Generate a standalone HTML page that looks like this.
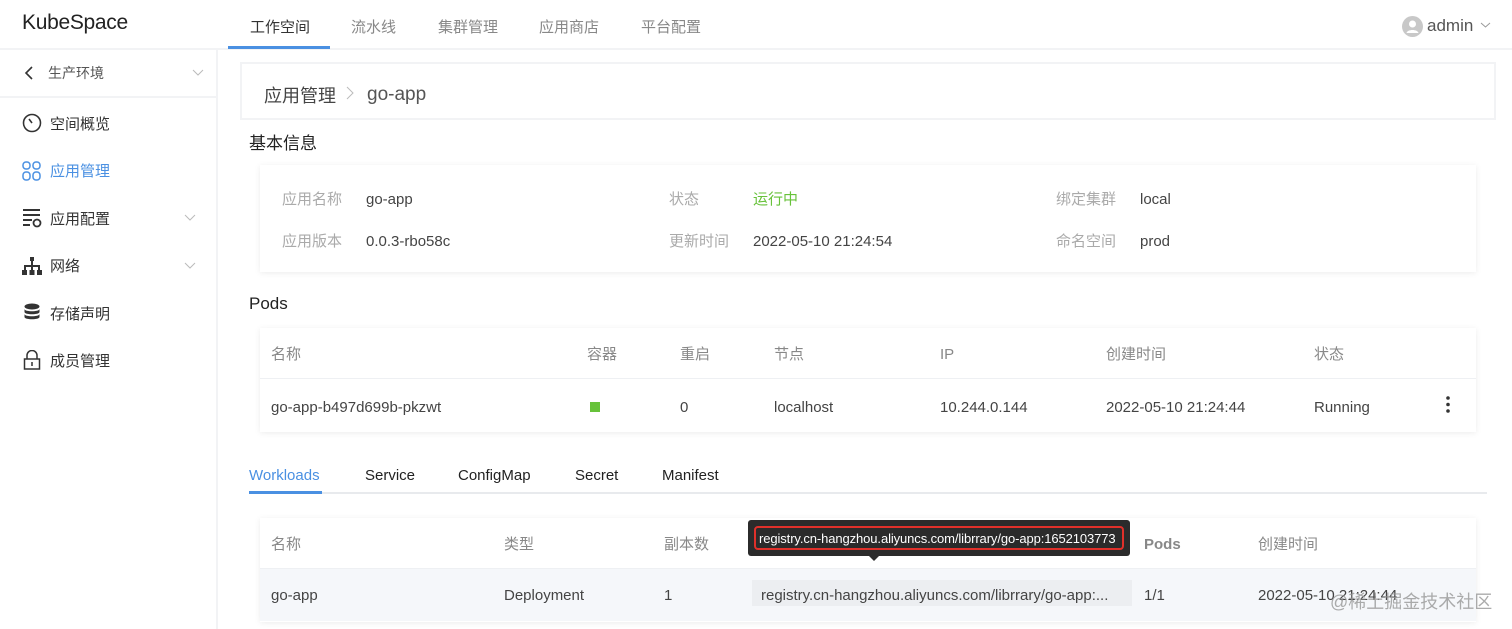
<!DOCTYPE html>
<html><head><meta charset="utf-8"><style>
*{box-sizing:border-box;margin:0;padding:0}
body{width:1512px;height:629px;overflow:hidden;background:#fff;font-family:"Liberation Sans","Noto Sans CJK SC",sans-serif;color:#333;position:relative}
.a{position:absolute;white-space:nowrap}
.card{position:absolute;background:#fff;box-shadow:0 1px 6px rgba(0,0,0,.08)}
.t{font-size:15px}
.l{margin-top:2px}
.c{margin-top:-1px}
</style></head><body>
<!-- header -->
<div class="a" style="left:0;top:0;width:1512px;height:50px;border-bottom:2px solid #f2f3f5"></div>
<div class="a" style="left:22px;top:11px;font-size:21px;color:#222;letter-spacing:-0.3px">KubeSpace</div>
<div class="a t c" style="left:250px;top:17px;color:#333">工作空间</div>
<div class="a" style="left:228px;top:46px;width:102px;height:3px;background:#4a90e2"></div>
<div class="a t c" style="left:351px;top:17px;color:#888">流水线</div>
<div class="a t c" style="left:438px;top:17px;color:#888">集群管理</div>
<div class="a t c" style="left:539px;top:17px;color:#888">应用商店</div>
<div class="a t c" style="left:641px;top:17px;color:#888">平台配置</div>
<div class="a" style="left:1402px;top:16px;width:21px;height:21px;border-radius:50%;background:#c8c8c8"></div>
<svg class="a" style="left:1402px;top:16px" width="21" height="21"><circle cx="10.5" cy="8" r="3.5" fill="#fff"/><path d="M4.5 17c1-4 11-4 12 0z" fill="#fff"/></svg>
<div class="a" style="left:1427px;top:16px;font-size:17px;color:#555">admin</div>
<svg class="a" style="left:1480px;top:21px" width="11" height="8"><path d="M1 2l4.5 4 4.5-4" stroke="#999" fill="none"/></svg>
<!-- sidebar -->
<div class="a" style="left:0;top:50px;width:218px;height:579px;border-right:2px solid #f2f3f5"></div>
<div class="a" style="left:0;top:96px;width:218px;height:2px;background:#f2f3f5"></div>
<svg class="a" style="left:24px;top:65px" width="12" height="16"><path d="M8 2l-6 6 6 6" stroke="#333" stroke-width="1.6" fill="none"/></svg>
<div class="a c" style="left:48px;top:64px;font-size:14px;color:#555">生产环境</div>
<svg class="a" style="left:192px;top:69px" width="12" height="8"><path d="M1 1l5 5 5-5" stroke="#bbb" fill="none"/></svg>
<svg class="a" style="left:22px;top:113px" width="20" height="20"><circle cx="10" cy="10" r="8.5" stroke="#333" stroke-width="1.6" fill="none"/><path d="M10 10l-3-4" stroke="#333" stroke-width="1.6"/></svg>
<div class="a t c" style="left:50px;top:114px">空间概览</div>
<svg class="a" style="left:22px;top:161px" width="20" height="20" fill="none" stroke="#4a90e2" stroke-width="1.5"><rect x="1" y="1" width="7" height="7" rx="3"/><rect x="11" y="1" width="7" height="7" rx="3"/><rect x="1" y="11" width="7" height="8" rx="3"/><rect x="11" y="11" width="7" height="8" rx="3"/></svg>
<div class="a t c" style="left:50px;top:161px;color:#4a90e2">应用管理</div>
<svg class="a" style="left:22px;top:208px" width="20" height="20" fill="#333"><rect x="1" y="1" width="17" height="2"/><rect x="1" y="6" width="17" height="2"/><rect x="1" y="11" width="9" height="2"/><rect x="1" y="16" width="7" height="2"/><circle cx="15" cy="15" r="3.5" stroke="#333" stroke-width="1.8" fill="none"/></svg>
<div class="a t c" style="left:50px;top:209px">应用配置</div>
<svg class="a" style="left:184px;top:214px" width="12" height="8"><path d="M1 1l5 5 5-5" stroke="#bbb" fill="none"/></svg>
<svg class="a" style="left:22px;top:256px" width="20" height="20" fill="#333"><rect x="8" y="1" width="4" height="4"/><rect x="9" y="5" width="2" height="5"/><rect x="2" y="9" width="16" height="2"/><rect x="2" y="9" width="2" height="5"/><rect x="9" y="9" width="2" height="5"/><rect x="16" y="9" width="2" height="5"/><rect x="0" y="14" width="5" height="5"/><rect x="7.5" y="14" width="5" height="5"/><rect x="15" y="14" width="5" height="5"/></svg>
<div class="a t c" style="left:50px;top:256px">网络</div>
<svg class="a" style="left:184px;top:262px" width="12" height="8"><path d="M1 1l5 5 5-5" stroke="#bbb" fill="none"/></svg>
<svg class="a" style="left:24px;top:303px" width="16" height="20" fill="#333"><ellipse cx="8" cy="3.5" rx="7.5" ry="3"/><path d="M.5 6c0 3 15 3 15 0v3c0 3-15 3-15 0zM.5 11c0 3 15 3 15 0v3c0 3-15 3-15 0z"/></svg>
<div class="a t c" style="left:50px;top:304px">存储声明</div>
<svg class="a" style="left:23px;top:350px" width="18" height="20" fill="none" stroke="#333" stroke-width="1.5"><path d="M4 9V5.5a5 5 0 0 1 10 0V9"/><rect x="1.5" y="9" width="15" height="10"/><path d="M9 12v4"/></svg>
<div class="a t c" style="left:50px;top:351px">成员管理</div>
<!-- breadcrumb -->
<div class="a" style="left:240px;top:62px;width:1256px;height:58px;border:2px solid #f2f3f5"></div>
<div class="a c" style="left:264px;top:83px;font-size:18px;color:#444">应用管理</div>
<svg class="a" style="left:345px;top:86px" width="10" height="14"><path d="M2 1l6 6-6 6" stroke="#bbb" fill="none"/></svg>
<div class="a" style="left:367px;top:84px;font-size:19px;color:#555">go-app</div>
<div class="a c" style="left:249px;top:130px;font-size:17px;color:#222">基本信息</div>
<div class="card" style="left:260px;top:165px;width:1216px;height:107px"></div>
<div class="a t c" style="left:282px;top:189px;color:#aaa">应用名称</div>
<div class="a t l" style="left:366px;top:189px;color:#444">go-app</div>
<div class="a t c" style="left:282px;top:231px;color:#aaa">应用版本</div>
<div class="a t l" style="left:366px;top:231px;color:#444">0.0.3-rbo58c</div>
<div class="a t c" style="left:669px;top:189px;color:#aaa">状态</div>
<div class="a t c" style="left:753px;top:189px;color:#67c23a">运行中</div>
<div class="a t c" style="left:669px;top:231px;color:#aaa">更新时间</div>
<div class="a t l" style="left:753px;top:231px;color:#444">2022-05-10 21:24:54</div>
<div class="a t c" style="left:1056px;top:189px;color:#aaa">绑定集群</div>
<div class="a t l" style="left:1140px;top:189px;color:#444">local</div>
<div class="a t c" style="left:1056px;top:231px;color:#aaa">命名空间</div>
<div class="a t l" style="left:1140px;top:231px;color:#444">prod</div>
<div class="a" style="left:249px;top:294px;font-size:17px;color:#222">Pods</div>
<div class="card" style="left:260px;top:328px;width:1216px;height:104px"></div>
<div class="a" style="left:260px;top:378px;width:1216px;height:1px;background:#eef0f3"></div>
<div class="a t c" style="left:271px;top:344px;color:#888">名称</div>
<div class="a t c" style="left:587px;top:344px;color:#888">容器</div>
<div class="a t c" style="left:680px;top:344px;color:#888">重启</div>
<div class="a t c" style="left:774px;top:344px;color:#888">节点</div>
<div class="a t l" style="left:940px;top:344px;color:#888">IP</div>
<div class="a t c" style="left:1106px;top:344px;color:#888">创建时间</div>
<div class="a t c" style="left:1314px;top:344px;color:#888">状态</div>
<div class="a t l" style="left:271px;top:397px;color:#444">go-app-b497d699b-pkzwt</div>
<div class="a" style="left:590px;top:402px;width:10px;height:10px;background:#67c23a"></div>
<div class="a t l" style="left:680px;top:397px;color:#444">0</div>
<div class="a t l" style="left:774px;top:397px;color:#444">localhost</div>
<div class="a t l" style="left:940px;top:397px;color:#444">10.244.0.144</div>
<div class="a t l" style="left:1106px;top:397px;color:#444">2022-05-10 21:24:44</div>
<div class="a t l" style="left:1314px;top:397px;color:#444">Running</div>
<svg class="a" style="left:1444px;top:395px" width="8" height="20" fill="#333"><circle cx="4" cy="3" r="1.8"/><circle cx="4" cy="9.5" r="1.8"/><circle cx="4" cy="16" r="1.8"/></svg>
<!-- tabs -->
<div class="a" style="left:249px;top:492px;width:1238px;height:2px;background:#e8eaed"></div>
<div class="a" style="left:249px;top:491px;width:73px;height:3px;background:#4a90e2"></div>
<div class="a t l" style="left:249px;top:465px;color:#4a90e2">Workloads</div>
<div class="a t l" style="left:365px;top:465px;color:#222">Service</div>
<div class="a t l" style="left:458px;top:465px;color:#222">ConfigMap</div>
<div class="a t l" style="left:575px;top:465px;color:#222">Secret</div>
<div class="a t l" style="left:662px;top:465px;color:#222">Manifest</div>
<div class="card" style="left:260px;top:518px;width:1216px;height:104px"></div>
<div class="a" style="left:260px;top:568px;width:1216px;height:53px;background:#f5f7fa;border-top:1px solid #eef0f3"></div>
<div class="a t c" style="left:271px;top:534px;color:#888">名称</div>
<div class="a t c" style="left:504px;top:534px;color:#888">类型</div>
<div class="a t c" style="left:664px;top:534px;color:#888">副本数</div>
<div class="a t l" style="left:1144px;top:534px;color:#888;font-weight:bold">Pods</div>
<div class="a t c" style="left:1258px;top:534px;color:#888">创建时间</div>
<div class="a t l" style="left:271px;top:585px;color:#444">go-app</div>
<div class="a t l" style="left:504px;top:585px;color:#444">Deployment</div>
<div class="a t l" style="left:664px;top:585px;color:#444">1</div>
<div class="a" style="left:752px;top:580px;width:380px;height:26px;background:#eceef1"></div>
<div class="a t l" style="left:761px;top:585px;color:#444">registry.cn-hangzhou.aliyuncs.com/librrary/go-app:...</div>
<div class="a t l" style="left:1144px;top:585px;color:#444">1/1</div>
<div class="a t l" style="left:1258px;top:585px;color:#444">2022-05-10 21:24:44</div>
<div class="a" style="left:1330px;top:588px;font-size:18px;color:rgba(150,150,150,.8)">@稀土掘金技术社区</div>
<!-- tooltip -->
<div class="a" style="left:748px;top:520px;width:382px;height:36px;background:#2b2b2b;border-radius:3px"></div>
<div class="a" style="left:868px;top:555px;width:0;height:0;border-left:6px solid transparent;border-right:6px solid transparent;border-top:6px solid #2b2b2b"></div>
<div class="a" style="left:754px;top:526px;width:370px;height:24px;border:2.5px solid #e0302a;border-radius:4px"></div>
<div class="a" style="left:759px;top:531px;font-size:13px;color:#fff;letter-spacing:-0.1px">registry.cn-hangzhou.aliyuncs.com/librrary/go-app:1652103773</div>
</body></html>
